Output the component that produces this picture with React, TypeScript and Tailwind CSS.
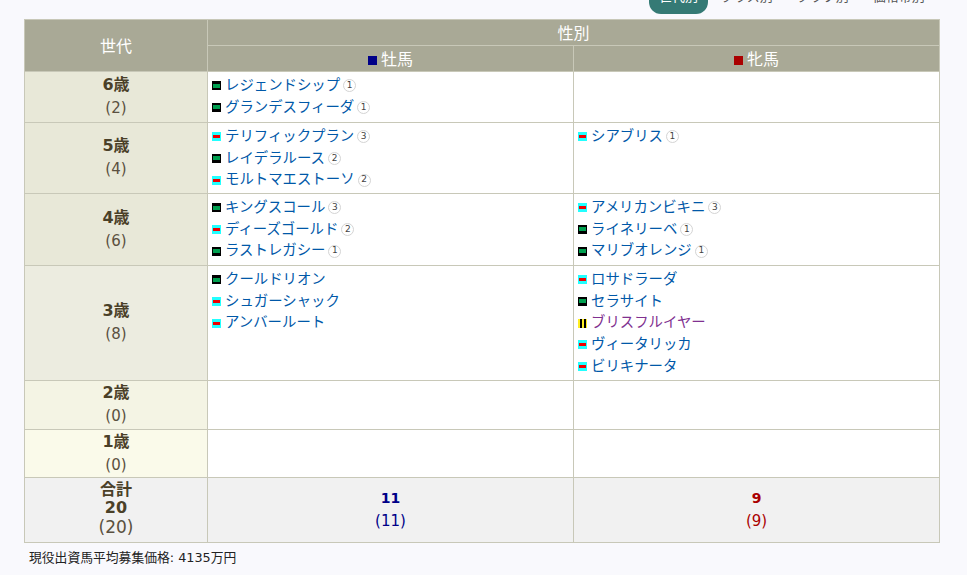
const fontStack = '"DejaVu Sans", "Noto Sans CJK JP", sans-serif';

type Silk = "green" | "cyan" | "yellow";
type Horse = { name: string; silk: Silk; count?: string; purple?: boolean };

function SilkIcon({ silk }: { silk: Silk }) {
  if (silk === "green") {
    return (
      <span className="inline-flex h-[9px] w-[9px] shrink-0 items-center justify-center bg-black">
        <span className="h-[4px] w-[7px] bg-[#00a050]" />
      </span>
    );
  }
  if (silk === "cyan") {
    return (
      <span className="inline-flex h-[9px] w-[9px] shrink-0 items-center justify-center bg-[#22ffff]">
        <span className="h-[3px] w-[7px] bg-[#f00000]" />
      </span>
    );
  }
  return (
    <span className="inline-flex h-[9px] w-[9px] shrink-0 items-center justify-center gap-[2px] bg-[#ffee22]">
      <span className="h-[9px] w-[2px] bg-black" />
      <span className="h-[9px] w-[2px] bg-black" />
    </span>
  );
}

function HorseList({ horses }: { horses: Horse[] }) {
  return (
    <ul className="flex flex-col">
      {horses.map((h) => (
        <li key={h.name} className="flex h-[21.75px] items-center pl-[4px]">
          <SilkIcon silk={h.silk} />
          <span className={`ml-[4px] text-[14.4px] ${h.purple ? "text-[#803090]" : "text-[#0058a8]"}`}>{h.name}</span>
          {h.count && (
            <span className="ml-[3px] flex h-[13px] w-[13px] items-center justify-center rounded-full border border-[#d4d4d4] text-[9px] text-[#444]">
              {h.count}
            </span>
          )}
        </li>
      ))}
    </ul>
  );
}

const rows: { age: string; n: number; h: string; bg: string; male: Horse[]; female: Horse[] }[] = [
  {
    age: "6歳", n: 2, h: "h-[51px]", bg: "bg-[#e8e8d8]",
    male: [
      { name: "レジェンドシップ", silk: "green", count: "1" },
      { name: "グランデスフィーダ", silk: "green", count: "1" },
    ],
    female: [],
  },
  {
    age: "5歳", n: 4, h: "h-[71px]", bg: "bg-[#e8e8d8]",
    male: [
      { name: "テリフィックプラン", silk: "cyan", count: "3" },
      { name: "レイデラルース", silk: "green", count: "2" },
      { name: "モルトマエストーソ", silk: "cyan", count: "2" },
    ],
    female: [{ name: "シアブリス", silk: "cyan", count: "1" }],
  },
  {
    age: "4歳", n: 6, h: "h-[72px]", bg: "bg-[#e8e8d8]",
    male: [
      { name: "キングスコール", silk: "green", count: "3" },
      { name: "ディーズゴールド", silk: "cyan", count: "2" },
      { name: "ラストレガシー", silk: "green", count: "1" },
    ],
    female: [
      { name: "アメリカンビキニ", silk: "cyan", count: "3" },
      { name: "ライネリーベ", silk: "green", count: "1" },
      { name: "マリブオレンジ", silk: "green", count: "1" },
    ],
  },
  {
    age: "3歳", n: 8, h: "h-[115px]", bg: "bg-[#ecece0]",
    male: [
      { name: "クールドリオン", silk: "green" },
      { name: "シュガーシャック", silk: "cyan" },
      { name: "アンバールート", silk: "cyan" },
    ],
    female: [
      { name: "ロサドラーダ", silk: "cyan" },
      { name: "セラサイト", silk: "green" },
      { name: "ブリスフルイヤー", silk: "yellow", purple: true },
      { name: "ヴィータリッカ", silk: "cyan" },
      { name: "ビリキナータ", silk: "cyan" },
    ],
  },
  { age: "2歳", n: 0, h: "h-[49px]", bg: "bg-[#f4f4e4]", male: [], female: [] },
  { age: "1歳", n: 0, h: "h-[48px]", bg: "bg-[#fafaea]", male: [], female: [] },
];

export default function App() {
  return (
    <div className="h-[575px] w-[967px] overflow-hidden bg-[#f9f9fd]" style={{ fontFamily: fontStack }}>
      <div className="flex h-[14px] items-end overflow-hidden pl-[649px] text-[13px] leading-[20px]">
        <span className="flex h-[26px] w-[59px] shrink-0 items-center justify-center rounded-b-[12px] bg-[#357a75] pb-[8px] text-white">世代別</span>
        <span className="ml-[13px] flex h-[26px] items-center pb-[8px] text-[#555]">クラス別</span>
        <span className="ml-[24px] flex h-[26px] items-center pb-[8px] text-[#555]">クラブ別</span>
        <span className="ml-[24px] flex h-[26px] items-center pb-[8px] text-[#555]">価格帯別</span>
      </div>
      <table className="ml-[24px] mt-[5px] w-[915px] table-fixed border-collapse border border-[#c8c8b8]">
        <colgroup>
          <col className="w-[183px]" />
          <col className="w-[366px]" />
          <col className="w-[366px]" />
        </colgroup>
        <thead className="bg-[#a9a996] text-[16px] font-normal leading-[22px] text-white">
          <tr className="h-[26px]">
            <th rowSpan={2} className="border border-[#c8c8b8] pt-[2px] font-normal">世代</th>
            <th colSpan={2} className="border border-[#c8c8b8] pt-[2px] font-normal">性別</th>
          </tr>
          <tr className="h-[26px]">
            <th className="border border-[#c8c8b8] pt-[2px] font-normal">
              <span className="mr-[4px] inline-block h-[9px] w-[9px] bg-[#000088]" />牡馬
            </th>
            <th className="border border-[#c8c8b8] pt-[2px] font-normal">
              <span className="mr-[4px] inline-block h-[9px] w-[9px] bg-[#aa0000]" />牝馬
            </th>
          </tr>
        </thead>
        <tbody className="bg-white">
          {rows.map((r) => (
            <tr key={r.age} className={r.h}>
              <td className={`border border-[#c8c8b8] text-center align-middle text-[#4a4028] ${r.bg}`}>
                <div className="mt-[-1px] text-[16px] font-bold leading-[24px]">{r.age}</div>
                <div className="text-[15px] leading-[23px] text-[#5a5040]">({r.n})</div>
              </td>
              <td className="border border-[#c8c8b8] align-top pt-[2.75px]"><HorseList horses={r.male} /></td>
              <td className="border border-[#c8c8b8] align-top pt-[2.75px]"><HorseList horses={r.female} /></td>
            </tr>
          ))}
          <tr className="h-[65px] bg-[#f1f1f1]">
            <td className="border border-[#c8c8b8] text-center text-[#4a4028]">
              <div className="mt-[-3px] text-[16px] font-bold leading-[19px]">合計</div>
              <div className="mt-[-1px] text-[16px] font-bold leading-[19px]">20</div>
              <div className="mt-[1px] text-[17px] leading-[19px] text-[#5a5040]">(20)</div>
            </td>
            <td className="border border-[#c8c8b8] text-center text-[#000088]">
              <div className="mt-[-1px] text-[14px] font-bold leading-[22px]">11</div>
              <div className="mt-[1px] text-[15px] leading-[22px]">(11)</div>
            </td>
            <td className="border border-[#c8c8b8] text-center text-[#aa0000]">
              <div className="mt-[-1px] text-[14px] font-bold leading-[22px]">9</div>
              <div className="mt-[1px] text-[15px] leading-[22px]">(9)</div>
            </td>
          </tr>
        </tbody>
      </table>
      <p className="ml-[29px] mt-[6px] text-[12.8px] leading-[18px] text-[#222]">現役出資馬平均募集価格: 4135万円</p>
    </div>
  );
}
